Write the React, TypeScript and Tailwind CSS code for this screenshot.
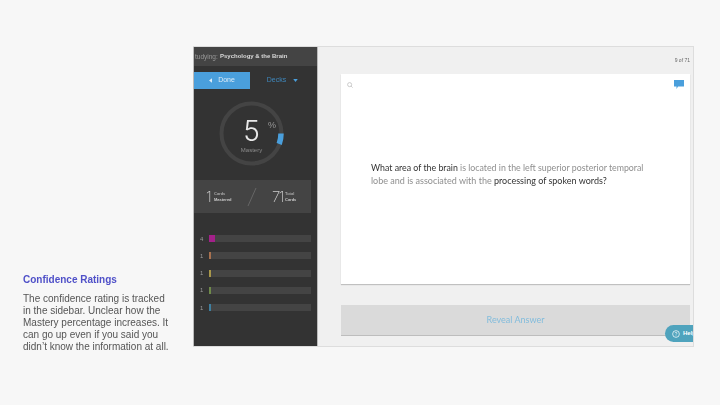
const BARS = [
  { n: '4', color: 'bg-[#a3218a]', w: 'w-[6px]' },
  { n: '1', color: 'bg-[#a8714f]', w: 'w-[2px]' },
  { n: '1', color: 'bg-[#a8974a]', w: 'w-[2px]' },
  { n: '1', color: 'bg-[#6f8a4a]', w: 'w-[2px]' },
  { n: '1', color: 'bg-[#3f7f9f]', w: 'w-[2px]' },
]

function Sidebar() {
  return (
    <div className="w-[125px] shrink-0 h-full bg-[#333333] flex flex-col blur-[0.4px] overflow-hidden border-l border-r border-[#bbbbbb]">
      <div className="h-[19px] bg-[#444444] flex items-center whitespace-nowrap text-[6px] overflow-hidden">
        <span className="text-[#999999] text-[6.5px] w-[26px] pl-[1px] shrink-0">tudying:</span>
        <span className="text-[#d8d8d8] font-bold">Psychology &amp; the Brain</span>
      </div>
      <div className="flex h-[17px] mt-[6px]">
        <div className="w-[56px] bg-[#4a9fdc] text-[#dcecf8] text-[7px] flex items-center justify-center gap-[6px]">
          <svg viewBox="0 0 4 6" className="w-[3px] h-[5px]">
            <path d="M4 0V6L0 3Z" fill="#dcecf8" />
          </svg>
          <span>Done</span>
        </div>
        <div className="flex-1 text-[#3f88bd] text-[7px] flex items-center justify-center gap-[7px] pr-[2px]">
          <span>Decks</span>
          <svg viewBox="0 0 6 4" className="w-[5px] h-[3px]">
            <path d="M0 0H6L3 4Z" fill="#4a9fdc" />
          </svg>
        </div>
      </div>

      {/* Mastery dial */}
      <div className="mt-[12px] ml-[25px]">
        <div className="relative w-[65px] h-[65px]">
          <svg viewBox="0 0 65 65" className="w-full h-full">
            <circle cx="32.5" cy="32.5" r="30" fill="none" stroke="#444444" strokeWidth="4" />
            <path d="M62 32.5 A29.5 29.5 0 0 1 60.2 43" fill="none" stroke="#4a9fdc" strokeWidth="5.5" />
          </svg>
          <div className="absolute inset-0 flex flex-col items-center">
            <span className="text-[28px] leading-none font-light text-[#e8e8e8] mt-[16px] font-['Inter',sans-serif]">5</span>
            <span className="text-[6px] leading-none text-[#8c8c8c] mt-[2px]">Mastery</span>
          </div>
          <span className="absolute left-[49px] top-[20px] text-[9px] leading-none text-[#999999]">%</span>
        </div>
      </div>

      {/* Cards mastered / total */}
      <div className="mr-[6px] mt-[14px] h-[33px] bg-[#444444] flex items-center pl-[12px] text-[#cccccc]">
        <span className="text-[15px] leading-none font-extralight w-[8px] font-['Inter',sans-serif]">1</span>
        <div className="w-[20px] text-[4px] leading-[6px] font-bold">
          <div className="text-[#aaaaaa]">Cards</div>
          <div>Mastered</div>
        </div>
        <svg viewBox="0 0 10 20" className="w-[10px] h-[20px] ml-[13px] shrink-0">
          <line x1="9" y1="1" x2="1" y2="19" stroke="#666666" strokeWidth="1" />
        </svg>
        <span className="ml-[15px] text-[15px] leading-none font-extralight tracking-[-1.5px] w-[13px] font-['Inter',sans-serif]">71</span>
        <div className="text-[4px] leading-[6px] font-bold">
          <div className="text-[#aaaaaa]">Total</div>
          <div>Cards</div>
        </div>
      </div>

      {/* Confidence bars */}
      <div className="mt-[22px] flex flex-col gap-[10.3px] pl-[6px] pr-[6px]">
        {BARS.map((bar, i) => (
          <div key={i} className="flex items-center h-[7px]">
            <span className="w-[9px] text-[6px] leading-none text-[#999999]">{bar.n}</span>
            <div className="flex-1 h-[7px] bg-[#444444]">
              <div className={`h-full ${bar.color} ${bar.w}`} />
            </div>
          </div>
        ))}
      </div>
    </div>
  )
}

function Main() {
  return (
    <div className="relative flex-1 h-full bg-[#f0f0f0] flex flex-col pl-[23px] pr-[3px] overflow-hidden">
      <div className="h-[27px] flex items-center justify-end pt-[1px] text-[5px] text-[#666666] blur-[0.3px]">
        9 of 71
      </div>
      <div className="h-[210px] bg-white shadow-[0_1px_1px_rgba(0,0,0,0.2)] relative pl-[30px] pr-[40px] pt-[87px]">
        <svg viewBox="0 0 8 8" className="absolute left-[6px] top-[8px] w-[6px] h-[6px] blur-[0.3px]">
          <circle cx="3.5" cy="3.5" r="2.7" fill="none" stroke="#bbbbbb" strokeWidth="1" />
          <line x1="5.5" y1="5.5" x2="7.5" y2="7.5" stroke="#bbbbbb" strokeWidth="1" />
        </svg>
        <svg viewBox="0 0 10 9" className="absolute right-[6px] top-[6px] w-[10px] h-[9px] blur-[0.2px]">
          <path d="M0 0H10V6.5H4L2.5 9V6.5H0Z" fill="#4a9fdc" />
        </svg>
        <p className="leading-[13px] text-[#8f8f8f] font-['Lato',sans-serif] blur-[0.35px]">
          <span className="block text-[8.8px]">
            <span className="text-[#333333]">What area of the brain</span> is located in the left superior posterior temporal
          </span>
          <span className="block text-[9px]">
            lobe and is associated with the <span className="text-[#333333]">processing of spoken words?</span>
          </span>
        </p>
      </div>
      <div className="mt-[21px] h-[31px] bg-[#dadada] border-b border-[#bdbdbd] flex items-center justify-center text-[9px] text-[#82bcdc] font-['Lato',sans-serif] blur-[0.3px]">
        Reveal Answer
      </div>
      {/* Help bubble clipped by the frame */}
      <div className="absolute left-[347px] top-[278px] w-[40px] h-[17px] rounded-full bg-[#4fa3bd] flex items-center pl-[7px] gap-[3px] text-white text-[6px] font-bold">
        <svg viewBox="0 0 10 10" className="w-[8px] h-[8px] shrink-0">
          <circle cx="5" cy="5" r="4.2" fill="none" stroke="white" strokeWidth="0.9" />
          <path d="M3.8 4C3.8 3.2 4.4 2.9 5 2.9S6.2 3.3 6.2 4C6.2 4.8 5 4.8 5 5.8" fill="none" stroke="white" strokeWidth="0.8" />
          <circle cx="5" cy="7.2" r="0.5" fill="white" />
        </svg>
        <span>Help</span>
      </div>
    </div>
  )
}

export default function App() {
  return (
    <div className="w-[720px] h-[405px] bg-[#f7f7f7] flex font-['Liberation_Sans',Arial,sans-serif] overflow-hidden">
      <div className="w-[193px] shrink-0 pl-[23px] pt-[274px] blur-[0.2px]">
        <h2 className="text-[10px] leading-[12px] font-bold text-[#4f50c8]">Confidence Ratings</h2>
        <p className="mt-[7px] text-[10px] leading-[12px] text-[#555555] whitespace-nowrap">
          The confidence rating is tracked
          <br />
          in the sidebar. Unclear how the
          <br />
          Mastery percentage increases. It
          <br />
          can go up even if you said you
          <br />
          didn’t know the information at all.
        </p>
      </div>
      <div className="mt-[46px] w-[501px] h-[301px] shrink-0 flex border-t border-b border-r border-[#dddddd]">
        <Sidebar />
        <Main />
      </div>
    </div>
  )
}
